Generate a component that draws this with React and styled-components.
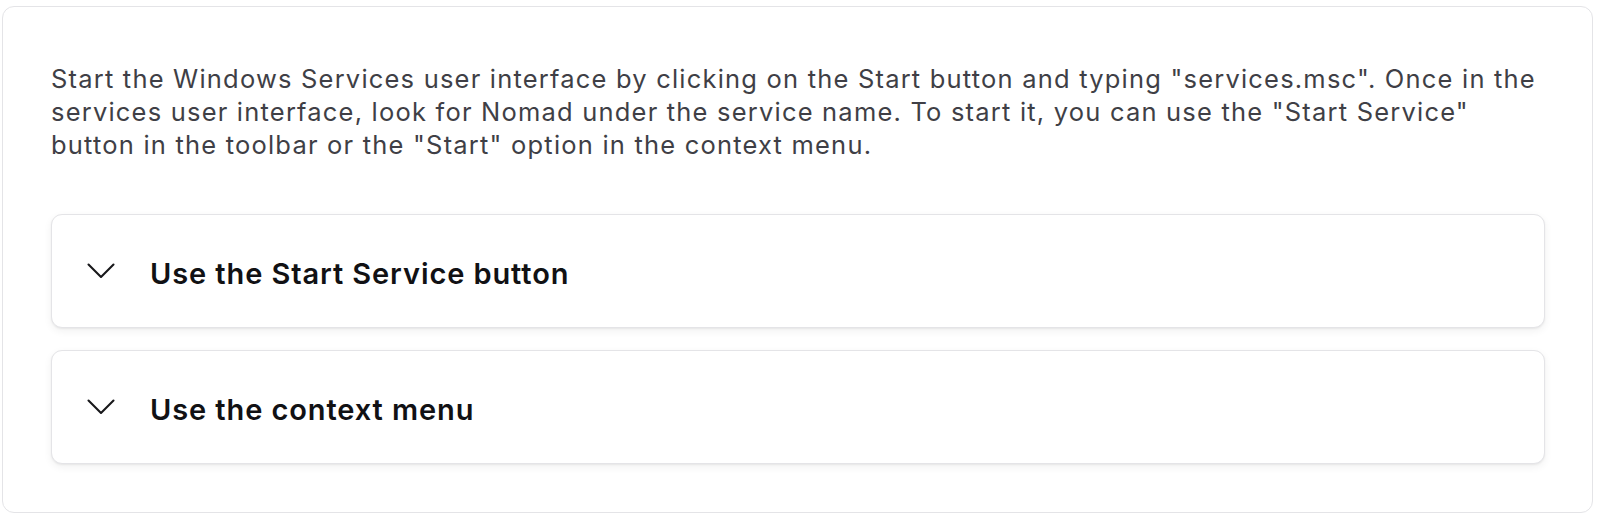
import React, { useState } from 'react';
import styled, { createGlobalStyle } from 'styled-components';

const GlobalStyle = createGlobalStyle`
  html, body {
    margin: 0;
    padding: 0;
    background: #ffffff;
  }
  body {
    font-family: Inter, "Noto Sans", "Liberation Sans", sans-serif;
    -webkit-font-smoothing: antialiased;
  }
`;

const Page = styled.div`
  padding: 6px 7px 7px 2px;
`;

const Card = styled.section`
  border: 1px solid #e4e4e7;
  border-radius: 12px;
  background: #fff;
  padding: 55px 47px 48px 48px;
  display: flex;
  flex-direction: column;
  gap: 22px;
`;

const Intro = styled.p`
  margin: 0 0 31px;
  font-size: 25.5px;
  line-height: 33px;
  letter-spacing: 1.2px;
  color: #3f3f46;
`;

const Item = styled.div`
  border: 1px solid #e4e4e7;
  border-radius: 11px;
  background: #fff;
  box-shadow: 0 3px 8px rgba(0, 0, 0, 0.06), 0 1px 2px rgba(0, 0, 0, 0.06);
`;

const Trigger = styled.button`
  width: 100%;
  height: 112px;
  display: flex;
  align-items: center;
  gap: 35px;
  padding: 0 0 0 35px;
  border: none;
  background: transparent;
  cursor: pointer;
  font-family: inherit;
  text-align: left;
`;

const Chevron = styled.svg`
  flex: none;
  transform: rotate(${p => (p.$open ? '180deg' : '0deg')});
  transition: transform 0.2s;
`;

const Title = styled.span`
  padding-top: 4px;
  font-size: 29px;
  font-weight: 600;
  letter-spacing: 0.9px;
  color: #111114;
`;

const Body = styled.div`
  padding: 0 36px 30px 149px;
  font-size: 24px;
  line-height: 33px;
  color: #3f3f46;
`;

const items = [
  {
    title: 'Use the Start Service button',
    body: 'Select Nomad in the list and click the "Start Service" button in the toolbar.',
  },
  {
    title: 'Use the context menu',
    body: 'Right-click Nomad in the list and choose "Start" from the context menu.',
  },
];

function Accordion({ title, body }) {
  const [open, setOpen] = useState(false);
  return (
    <Item>
      <Trigger onClick={() => setOpen(!open)}>
        <Chevron $open={open} width="28" height="16" viewBox="0 0 28 16" fill="none">
          <polyline
            points="1.5,1.5 14,14 26.5,1.5"
            stroke="#18181b"
            strokeWidth="2.1"
            strokeLinecap="round"
            strokeLinejoin="round"
          />
        </Chevron>
        <Title>{title}</Title>
      </Trigger>
      {open && <Body>{body}</Body>}
    </Item>
  );
}

export default function App() {
  return (
    <Page>
      <GlobalStyle />
      <Card>
        <Intro>
          Start the Windows Services user interface by clicking on the Start button and typing
          "services.msc". Once in the services user interface, look for Nomad under the service
          name. To start it, you can use the "Start Service"
          <br />
          button in the toolbar or the "Start" option in the context menu.
        </Intro>
        {items.map(item => (
          <Accordion key={item.title} {...item} />
        ))}
      </Card>
    </Page>
  );
}
